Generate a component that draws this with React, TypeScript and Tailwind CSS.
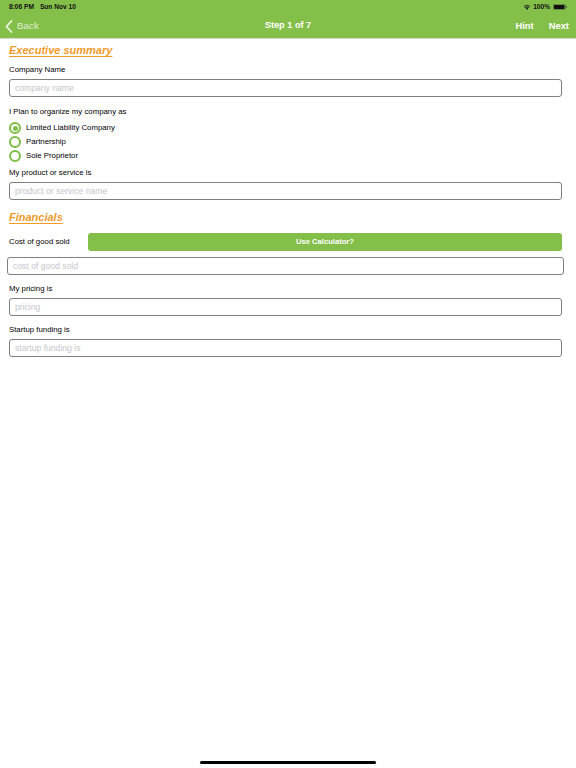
import React from 'react';

const font = { fontFamily: '"Liberation Sans", Arial, sans-serif' };

const Label = ({ children, className = '' }: any) => (
  <p className={`text-[7.8px] leading-[10px] text-[#000] ${className}`}>{children}</p>
);

const Field = ({ placeholder, className = '' }: any) => (
  <div
    className={`h-[18px] rounded-[3px] border border-[#7f7f7f] flex items-center px-[5px] text-[8.6px] text-[#c5c5ca] ${className}`}
  >
    {placeholder}
  </div>
);

const SectionTitle = ({ children, className = '' }: any) => (
  <h2
    className={`text-[11px] leading-[14px] font-bold italic text-[#f39a2b] underline decoration-[#f39a2b] underline-offset-2 ${className}`}
  >
    {children}
  </h2>
);

const Radio = ({ label, checked }: any) => (
  <div className="h-[14px] flex items-center gap-[5px]">
    <span className="w-[12px] h-[12px] rounded-full border-2 border-[#7dbd45] flex items-center justify-center">
      {checked && <span className="w-[5px] h-[5px] rounded-full bg-[#7dbd45]" />}
    </span>
    <span className="text-[7.8px] text-[#000]">{label}</span>
  </div>
);

const StatusBar = () => (
  <div className="h-[14px] flex items-center justify-between px-[9px] text-[6.6px] font-semibold text-[#111]">
    <span>
      8:06 PM<span className="ml-[6px]">Sun Nov 10</span>
    </span>
    <div className="flex items-center gap-[2px]">
      <svg width="8" height="6" viewBox="0 0 16 12">
        <path d="M8 12 L5.5 9 A4 4 0 0 1 10.5 9 Z" fill="#111" />
        <path d="M3.6 6.9 A6.5 6.5 0 0 1 12.4 6.9 L11.2 8.2 A4.8 4.8 0 0 0 4.8 8.2 Z" fill="#111" />
        <path d="M1.4 4.5 A9.6 9.6 0 0 1 14.6 4.5 L13.4 5.8 A7.8 7.8 0 0 0 2.6 5.8 Z" fill="#111" />
      </svg>
      <span>100%</span>
      <svg width="14" height="6" viewBox="0 0 28 12" className="ml-[1px]">
        <rect x="0.5" y="0.5" width="24" height="11" rx="3" fill="none" stroke="#333" strokeWidth="1" />
        <rect x="2" y="2" width="21" height="8" rx="1.5" fill="#111" />
        <rect x="25.5" y="4" width="1.6" height="4" rx="0.8" fill="#333" />
      </svg>
    </div>
  </div>
);

const NavBar = () => (
  <div className="h-[24px] relative flex items-center justify-between px-[5px]">
    <div className="flex items-center gap-[4px] text-white/75 text-[9.8px]">
      <svg width="8" height="13" viewBox="0 0 8 13">
        <path d="M6.5 1 L1.5 6.5 L6.5 12" fill="none" stroke="rgba(255,255,255,0.85)" strokeWidth="1.8" strokeLinecap="round" strokeLinejoin="round" />
      </svg>
      <span>Back</span>
    </div>
    <span className="absolute left-1/2 -translate-x-1/2 text-white font-bold text-[9.2px]">Step 1 of 7</span>
    <div className="flex items-center gap-[15px] text-white font-bold text-[9.4px] pr-[2px]">
      <span>Hint</span>
      <span>Next</span>
    </div>
  </div>
);

export default function App() {
  return (
    <div className="w-[576px] h-[768px] bg-white flex flex-col" style={font}>
      <header className="bg-[#84bf4a] h-[39px] border-b border-[#d6d6d6]">
        <StatusBar />
        <NavBar />
      </header>

      <main className="flex flex-col px-[9px] pr-[14px]">
        <SectionTitle className="mt-[4px]">Executive summary</SectionTitle>

        <Label className="mt-[8px]">Company Name</Label>
        <Field className="mt-[4px]" placeholder="company name" />

        <Label className="mt-[10px]">I Plan to organize my company as</Label>
        <div className="mt-[4px] flex flex-col">
          <Radio label="Limited Liability Company" checked />
          <Radio label="Partnership" />
          <Radio label="Sole Proprietor" />
        </div>

        <Label className="mt-[5px]">My product or service is</Label>
        <Field className="mt-[4px]" placeholder="product or service name" />

        <SectionTitle className="mt-[10px]">Financials</SectionTitle>

        <div className="mt-[9px] flex items-center">
          <Label className="w-[79px]">Cost of good sold</Label>
          <button className="flex-1 h-[18px] rounded-[3px] bg-[#84bf4a] text-white font-bold text-[7.6px]">
            Use Calculator?
          </button>
        </div>
        <Field className="mt-[6px] -mx-[2px]" placeholder="cost of good sold" />

        <Label className="mt-[9px]">My pricing is</Label>
        <Field className="mt-[4px]" placeholder="pricing" />

        <Label className="mt-[9px]">Startup funding is</Label>
        <Field className="mt-[4px]" placeholder="startup funding is" />
      </main>

      <div className="mt-auto mb-[4px] flex justify-center">
        <div className="w-[176px] h-[3.5px] rounded-full bg-black" />
      </div>
    </div>
  );
}
